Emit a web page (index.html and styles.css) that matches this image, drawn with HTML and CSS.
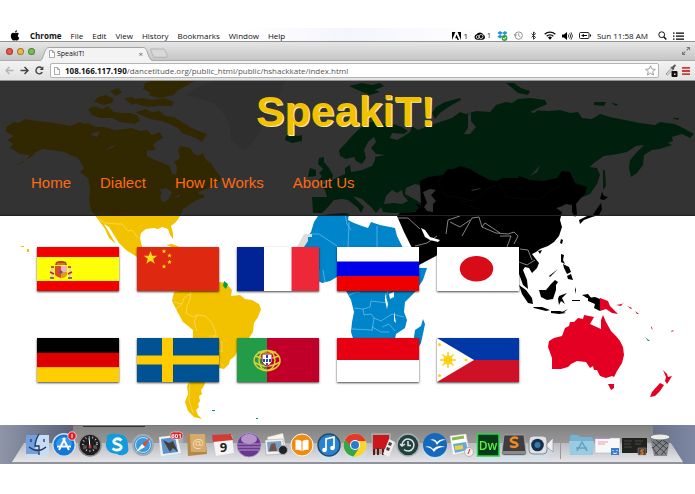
FILE: index.html
```html
<!DOCTYPE html>
<html lang="en">
<head>
<meta charset="utf-8">
<title>SpeakiT!</title>
<link rel="stylesheet" href="styles.css">
</head>
<body>
<div class="screen">
  <div class="menubar">
    <svg class="apple" viewBox="0 0 10 11"><path d="M7 .2C7 1.600 6.100 2.500 5 2.600 4.900 1.400 5.900.4 7 .2ZM5.100 3.200C5.800 3.200 6.300 2.700 7.200 2.800c.8.1 1.400.5 1.700 1C7.200 4.800 7.500 7.100 9.300 7.700 8.900 8.900 8 10.600 7 10.600c-.7 0-1-.4-1.800-.4s-1.100.4-1.800.4C2.200 10.600.8 8.200.8 6.100.8 4 2 2.800 3.300 2.800c.8 0 1.300.4 1.800.4Z"/></svg>
    <nav class="menus">
      <button class="menu strong">Chrome</button>
      <button class="menu">File</button>
      <button class="menu">Edit</button>
      <button class="menu">View</button>
      <button class="menu">History</button>
      <button class="menu">Bookmarks</button>
      <button class="menu">Window</button>
      <button class="menu">Help</button>
    </nav>
    <div class="status">
      <span class="pair"><svg class="s9" viewBox="0 0 9 9"><path d="M0 1h3.400L0 9ZM5.600 1H9v8ZM4.500 3.500 7 9H5.500L4.800 7.200H3.200Z"/></svg>1</span>
      <span class="pair cloud"><svg class="s11" viewBox="0 0 11 9"><path d="M3 8.300a2.800 2.800 0 0 1-.4-5.500A3.900 3.900 0 0 1 9.500 3.200 2.700 2.700 0 0 1 8.300 8.300Z"/><g fill="none" stroke="#fff" stroke-width=".8"><circle cx="3.700" cy="5.500" r="1.500"/><circle cx="7" cy="5" r="2"/></g></svg><small>1</small></span>
      <svg class="s11" viewBox="0 0 11 10"><path fill="#2293d8" d="M3 0 5.500 1.800 8 0l2.500 2L8 3.800 10.500 5.500 8 7.500 5.500 5.600 3 7.500.3 5.500 3 3.800.3 2Z"/><path fill="#fff" d="M5.500 2.200 7.500 3.700 5.500 5.200 3.200 3.700Z"/><circle cx="7.500" cy="7" r="2.900" fill="#37a33a"/><path d="m6 7 1.200 1.200 1.900-2.300" fill="none" stroke="#fff"/></svg>
      <svg class="s9" viewBox="0 0 9 9"><circle cx="4.700" cy="4.600" r="3.700" fill="none" stroke="#888" stroke-width=".9"/><path d="M4.700 2.300v2.600l1.800 1M.2 3l1.200 2L3 3.500" fill="none" stroke="#888" stroke-width=".8"/></svg>
      <svg class="s9" viewBox="0 0 9 9"><path d="m2.500 2.700 4 3.700-2 1.800V1l2 1.700-4 3.700" fill="none" stroke="#222" stroke-width=".9"/></svg>
      <svg class="s12" viewBox="0 0 12 9"><g fill="none" stroke="#111" stroke-width="1.300"><path d="M.7 3.300a7.500 7.500 0 0 1 10.600 0M2.600 5.300a4.800 4.800 0 0 1 6.800 0"/></g><path d="M4 6.600a2.800 2.800 0 0 1 4 0L6 8.700Z"/></svg>
      <svg class="s11" viewBox="0 0 11 9"><path d="M0 3h2l3-2.500v8L2 6H0Z"/><path d="M6.200 3q1.200 1.500 0 3M7.600 1.800q2.200 2.700 0 5.400M9 .8q3 3.700 0 7.400" fill="none" stroke="#111" stroke-width=".8"/></svg>
      <svg class="s12" viewBox="0 0 12 8"><rect x=".5" y="1" width="9.500" height="6" rx="1" fill="none" stroke="#222"/><path d="M11 3h1v2h-1ZM2 4l3-1.500v1h3v1H5v1Z"/></svg>
      <span class="clock">Sun 11:58 AM</span>
      <svg class="s9 search" viewBox="0 0 9 9"><circle cx="3.700" cy="3.700" r="2.900" fill="none" stroke="#111"/><path d="m5.700 5.700 2.700 2.800" stroke="#111" stroke-width="1.400"/></svg>
      <svg class="s11" viewBox="0 0 11 9"><path d="M0 1h1.500v1.300H0zM3 1h8v1.300H3zM0 4h1.500v1.300H0zM3 4h8v1.300H3zM0 7h1.500v1.300H0zM3 7h8v1.300H3z"/></svg>
    </div>
  </div>

  <div class="tabstrip">
    <div class="lights"><button class="light red" aria-label="Close"></button><button class="light amber" aria-label="Minimise"></button><button class="light green" aria-label="Zoom"></button></div>
    <div class="tab">
      <svg class="tabshape" viewBox="0 0 118 14" preserveAspectRatio="none"><path d="M0 14C3 14 3.500 11 5 7S7.500.5 10 .5h96c3 0 3.500 3 5 7s3 6.500 6 6.500" fill="#f3f3f3" stroke="#a2a2a2"/></svg>
      <svg class="doc" viewBox="0 0 6 8"><path d="M.5.500h3L5.500 2.500v5h-5ZM3.500.500v2h2" fill="#fff" stroke="#888" stroke-width=".7"/></svg>
      <span class="tabname">SpeakiT!</span>
      <button class="x" aria-label="Close tab">×</button>
    </div>
    <button class="newtab" aria-label="New tab"><svg viewBox="0 0 20 10"><path d="M2 1h12q1.500 0 2 1l2.300 6q.4 1.300-1 1.300H6Q4.800 9.300 4.300 8L1.500 2Q1 1 2 1Z" fill="#d8d8d8" stroke="#aaa" stroke-width=".8"/></svg></button>
    <svg class="full" viewBox="0 0 8 8"><path d="M4.800.5h2.700v2.700M7.500.5 4.700 3.300M3.200 7.500H.5V4.800M.5 7.500l2.800-2.800" fill="none" stroke="#777" stroke-width="1.100"/></svg>
  </div>

  <form class="toolbar">
    <button type="button" class="tool" aria-label="Back"><svg viewBox="0 0 9 9"><path d="M8.500 4.500H1.500M4.500 1 1 4.500 4.500 8" fill="none" stroke="#b4b4b4" stroke-width="1.400"/></svg></button>
    <button type="button" class="tool" aria-label="Forward"><svg viewBox="0 0 9 9"><path d="M.5 4.500H7.500M4.500 1 8 4.500 4.500 8" fill="none" stroke="#444" stroke-width="1.500"/></svg></button>
    <button type="button" class="tool" aria-label="Reload"><svg viewBox="0 0 9 9"><path d="M7.300 6.200A3.400 3.400 0 1 1 6.900 2.200" fill="none" stroke="#444" stroke-width="1.400"/><path d="M8.300.3v3.700H4.700Z" fill="#444"/></svg></button>
    <div class="address">
      <svg class="doc" viewBox="0 0 6 8"><path d="M.5.500h3L5.500 2.500v5h-5ZM3.500.500v2h2" fill="#fff" stroke="#888" stroke-width=".7"/></svg>
      <label class="host" for="url">108.166.117.190</label><input class="url" id="url" value="/dancetitude.org/public_html/public/hshackkate/index.html">
      <svg class="star" viewBox="0 0 11 11"><path d="m5.500.8 1.400 3.200 3.500.3-2.700 2.300.9 3.500-3.100-1.900-3.100 1.900.9-3.500L.6 4.300l3.500-.3Z" fill="#fff" stroke="#888" stroke-width=".8"/></svg>
    </div>
    <button type="button" class="ext" aria-label="Colour picker"><svg viewBox="0 0 13 13"><path d="m1 10 5.500-6 1.600 1.600L2.400 11Z" fill="#ddd" stroke="#777" stroke-width=".7"/><path d="m6 3 1.500-.4L9.200.7q1.600-.5 1.700 1L9 4l.2 1.200-1 .8L5.500 3.500Z" fill="#555"/><rect x="6.500" y="7" width="6" height="6" rx="1" fill="#111"/><path d="M9 9.500h1.500V11H9z" fill="#ddd"/></svg></button>
    <button type="button" class="more" aria-label="Menu"><svg viewBox="0 0 8 8"><path d="M0 0h8v1.800H0zM0 3.100h8v1.800H0zM0 6.200h8V8H0z" fill="#cf3a3c"/></svg></button>
  </form>

  <div class="page">
    <svg class="map" viewBox="0 81 695 344" preserveAspectRatio="xMinYMin slice" aria-hidden="true">
      <path fill="#e8e8e8" d="M185 95 200 86 215 81H285L280 95 274 108 266 122 258 134 250 146 243 151 238 146 231 140 230 124 222 112 214 103 198 99Z"/>
      <g fill="#f2c200">
        <path d="M6 127 14 122 19 123 25 119 36 121 48 122 60 124 70 126 80 122 84 124 88 123 96 127 105 127 114 130 124 129 132 128 140 131 147 130 152 135 160 132 163 138 156 142 152 146 147 151 147 156 155 160 163 163 170 166 172 174 176 175 177 167 174 162 180 158 178 150 180 146 190 148 194 154 198 156 203 153 206 160 211 163 215 170 221 177 220 181 214 185 207 189 200 191 198 194 205 195 203 198 197 200 190 204 183 209 180 216 176 222 171 226 173 233 173 239 170 235 168 229 162 227 158 229 154 228 146 229 141 233 140 238 142 247 150 247 154 252 158 262 165 272 175 277 185 290 170 285 158 272 148 260 137 257 126 250 119 243 114 235 109 227 104 224 110 234 116 244 109 238 105 229 97 218 91 210 89 200 90 188 88 178 80 172 84 168 78 158 70 155 64 152 52 150 43 149 36 152 32 156 22 163 12 167 26 160 30 155 20 154 10 148 13 144 7 140 14 136 6 132Z"/>
        <path d="M88 109 94 106 102 109 108 106 114 112 122 113 130 113 137 115 140 120 135 124 120 122 112 118 100 118 92 115ZM94 102 98 97 106 95 114 99 112 103 104 105ZM124 98 132 97 139 102 132 105ZM136 112 146 109 152 112 160 111 165 116 174 117 182 122 190 127 196 130 207 134 202 142 196 138 190 136 182 133 178 128 170 124 162 121 155 120 148 118 140 115ZM145 83 152 81H195L186 86 178 90 174 95 160 98 148 95 151 93 143 89ZM134 99 142 98 152 100 164 98 174 102 172 106 160 106 148 107 136 104ZM110 91 118 88 122 92 116 96ZM144 144H152L156 149 150 151 143 148Z"/>
        <path d="M172 301 174 292 180 291 190 284 219 282 226 283 232 290 231 296 240 295 245 299 252 300 259 304 261 309 258 317 254 323 253 332 249 338 243 344 238 350 235 356 230 360 229 364 224 369 219 368 212 374 206 380 204 386 201 390 202 394 199 396 200 401 198 404 199 407 196 410 198 415 202 419 194 417 188 411 185 402 188 394 187 386 190 380 191 360 193 338 193 330 183 322 178 313Z"/>
        <path d="M166 245 172 244 180 247 179 250 172 247ZM27 249H29V252H27ZM21 246H24V247H21Z"/>
      </g>
      <g fill="#00a047">
        <path d="M339 150 345 144 352 136 358 130 366 124 374 121 380 124 390 123 402 127 408 131 404 134 392 133 390 138 397 140 404 136 410 132 412 126 418 130 428 126 440 122 452 118 460 112 466 114 476 111 490 112 496 105 506 102 512 103 518 99 530 98 545 100 547 104 535 110 548 111 560 110 570 113 578 112 582 118 592 119 600 114 610 117 625 120 640 123 655 125 660 122 675 124 685 129 694 134 690 138 682 134 672 137 673 141 668 143 672 145 660 149 652 150 644 155 643 165 637 173 631 177 629 168 630 160 636 153 644 145 636 146 627 152 618 154 604 156 594 163 590 167 597 168 600 175 597 184 590 194 583 197 570 195 520 190 440 190 423 186 415 184 406 188 405 194 416 200 424 205 418 211 405 213 393 213 383 212 381 207 376 213 371 207 362 199 353 196 364 207 361 213 358 208 348 200 342 199 334 200 328 207 322 213 313 213 312 197 327 197 325 190 320 186 330 181 338 177 345 174 345 168 350 165 351 172 362 170 372 166 375 160 375 157 385 155 376 154 371 148 376 142 374 137 368 142 364 150 366 158 362 164 356 161 354 157 346 159 340 156Z"/>
        <path d="M319 158 324 157 324 162 329 168 333 175 332 180 318 181 322 176 319 173 323 169 318 164ZM310 168 316 170 316 176 308 177 309 171ZM286 136 292 134 298 136 302 135 302 141 292 143 285 140ZM349 86 362 83 372 85 380 83 384 86 375 90 380 92 370 95 360 91ZM432 113 436 107 445 102 460 98 461 100 450 106 440 113 435 119ZM506 83 514 83 521 88 530 91 528 95 518 93 512 88ZM594 102 606 102 604 106 594 105ZM611 103 618 104 616 106ZM672 118 679 118 678 120ZM603 169 605 171 606 186 603 190ZM224 281 228 284 226 289 223 286ZM212 410H215V411H212ZM256 418H258V419H256ZM645 337 650 341H648Z"/>
      </g>
      <path fill="#fff" d="M468 114 471 113 471 121 476 127 470 134 464 134 468 128 468 122ZM530 112 543 106 534 113ZM540 165 537 172 530 176 536 170ZM384 204 386 196 392 190 397 193 402 190 403 195 408 201 402 204 394 203ZM159 190 166 188 172 192 168 200 163 202 160 198 162 192ZM174 198 180 194 179 197ZM90 134 100 131 97 137ZM104 150 116 144 112 148Z"/>
      <g fill="#0085ca">
        <path d="M305 240 311 232 314 222 318 216 330 214 345 213 349 214 348 220 354 223 362 226 368 228 371 222 380 225 390 227 395 228 397 236 403 248 409 262 413 268 427 268 423 280 415 292 405 302 404 312 407 320 405 328 396 334 394 345 355 345 351 332 352 322 354 312 351 300 346 291 342 282 337 277 330 281 322 283 313 278 307 270 303 262 303 250Z"/>
        <path d="M423 319 425 324 424 329 421 343 418 348 415 346 414 337 415 330 421 326Z"/>
      </g>
      <path fill="#ddd" d="M304 234H312V237H308V241L304 247H297Z"/>
      <g fill="none" stroke="#86c8ee" stroke-width=".6">
        <path d="M311 234H319L337 246M349 222 348 247M345 214 347 224 351 230M377 226V247M319 270V281M323 270 325 282M348 296 355 292 360 292M354 308 363 309 364 315 371 314 374 318 372 331M352 329 372 330M363 309 370 307 371 301 388 303M388 291 385 300M374 318 381 321 392 314 404 317M382 327 389 324 395 331M372 327 381 332 389 332"/>
      </g>
      <path fill="#fff" d="M389 294 394 292 394 297 390 299ZM385 293 388 304 387 309 385 300ZM394 311 396 323 394 321Z"/>
      <g fill="none" stroke="#ffe177" stroke-width=".6">
        <path d="M99 219 105 223 117 224 122 224 128 231 132 230 139 239M174 302 182 304 184 298 190 294M182 304 176 309M191 291 190 300 187 306 186 313 193 317 197 315 205 316 212 323 216 333 214 338M197 315 194 322 197 331M214 338 222 342 222 352 216 349M209 336 218 336M196 341 193 356 190 380 189 400 193 413M219 361 224 367"/>
      </g>
      <g>
        <path d="M420 181 428 177 443 175 448 169 454 169 460 166 470 169 478 174 490 180 497 181 503 178 518 178 519 176 530 180 543 181 557 178 562 171 570 172 575 183 587 187 585 194 580 199 576 204 577 214 575 217 572 212 572 205 566 204 560 207 556 208 562 212 560 220 562 227 559 236 554 242 548 246 540 249 536 252 532 254 535 258 539 263 537 268 532 273 529 268 525 267 523 270 527 280 528 289 523 285 519 274 515 262 505 270 460 270 442 250 436 256 419 265 412 248 404 232 397 216 400 213 415 212 419 208 415 203 421 206Z"/>
        <path d="M602 192 604 196 608 197 604 200 600 199ZM601 203 602 209 599 215 592 217 584 220 580 224 579 220 587 216 593 215 596 210ZM561 239 563 240 562 244 560 243ZM538 251 542 250 540 254ZM561 254 564 255 563 260 565 264 561 262ZM563 264 569 267 571 272 567 274 564 268ZM567 276 571 274 573 280 568 279ZM519 285 526 290 532 298 533 304 528 303 522 294ZM533 307 542 307 550 310 546 311 534 308ZM539 290H546L551 284 555 280 558 282 556 285 556 290 553 299 547 300 541 297ZM559 296 567 293 562 298 565 304 561 301 559 305 558 299ZM551 311 560 311 566 313 559 314 551 313ZM582 295 588 294 592 299 587 298ZM588 298 595 297 600 299V311L594 308 595 304 588 301ZM560 313 568 309 563 313ZM575 290 576 287V294ZM549 276 558 269 550 277ZM572 300 580 300 580 301H572Z"/>
      </g>
      <path fill="none" stroke="#444" stroke-width=".5" d="M497 181 504 190 506 197 522 199 540 199 552 190 560 187M460 202 475 200 487 189 497 185M467 205 480 210M442 175 438 183 445 195 470 200"/>
      <path fill="none" stroke="#bbb" stroke-width=".7" d="M462 236 472 218 479 217 482 227 496 233 508 234 514 232 518 236 514 244M500 236H511L507 247M397 218 408 218 420 229M415 246 427 243 437 236M446 234 448 220 460 216M450 222 460 227 470 220M520 249 528 250 532 260M519 262 527 265 535 260M482 227 485 223 500 233"/>
      <path fill="#fff" d="M423 192 430 189 436 190 431 195 436 201 433 204 433 212 427 211 424 207 427 203ZM421 228 425 230 430 237 440 240 438 242 430 240 425 237ZM471 190 481 188 480 189 472 191Z"/>
      <g fill="#e30022">
        <path d="M548 347 549 341 554 338 562 336 565 328 569 326 570 322 574 322 578 318 583 319 584 315 594 317 590 324 601 329 601 320 603 315 606 322 611 331 616 336 620 341 623 347 624 355 622 363 617 371 614 377 612 376 606 378 600 376 597 370 594 370 593 366 590 368 586 362 577 361 571 364 568 367 561 369 552 369 552 358ZM608 384H614V388L611 390Z"/>
        <path d="M600 298 608 301 610 306 614 310 618 314 612 313 606 309 600 311ZM663 370 667 374 668 377 672 376 669 381 667 384 665 381 666 377ZM660 383 664 385 660 391 655 396 650 397 652 392ZM616 305 622 304 624 302 621 306ZM627 306 632 308 631 309ZM635 311 639 314H637ZM651 326 653 330 651 328ZM671 331 674 330 672 332Z"/>
      </g>
    </svg>

    <header class="header">
      <h1 class="title">SpeakiT!</h1>
      <nav class="nav">
        <a href="#home">Home</a><a href="#dialect">Dialect</a><a href="#how">How It Works</a><a href="#about">About Us</a>
      </nav>
    </header>

    <main class="flags">
      <a class="flag" href="#es" aria-label="Spanish"><svg viewBox="0 0 82 44"><path fill="#f20000" d="M0 0h82v44H0z"/><path fill="#ffff08" d="M0 10h82v24H0z"/><path d="M15 21v9M33 21v9" stroke="#e4cfc4" stroke-width="2"/><path d="M14 20h3M31 20h3M13 25l4 2M35 25l-4 2" stroke="#c01d2c" stroke-width="1.500"/><path d="M13 31h4M31 31h4" stroke="#465079" stroke-width="1.500"/><path d="M18 19h12v9q-6 6-12 0Z" fill="#dc4828"/><path d="M24 19h6v6h-6Z" fill="#edb4bf"/><path d="M24 25h6v3l-3 3-3 0Z" fill="#e39a25"/><circle cx="24" cy="25" r="1.500" fill="#425ca8"/><path d="m18 18 1-3 3-1h4l3 1 1 3Z" fill="#b94330"/><path d="M20 17h8" stroke="#ef9b45"/></svg></a>
      <a class="flag" href="#zh" aria-label="Chinese"><svg viewBox="0 0 82 44"><path fill="#de2910" d="M0 0h82v44H0z"/><path fill="#ffdf18" d="m13.500 4 1.700 4.800h5.100l-4.100 3 1.500 4.900-4.200-3-4.200 3 1.500-4.900-4.100-3h5.100ZM27 2l.6 1.500h1.700L28 4.500l.5 1.700L27 5.200l-1.500 1 .5-1.700-1.300-1h1.700ZM32.500 6.300l.6 1.500h1.700l-1.300 1 .5 1.700-1.500-1-1.500 1 .5-1.700-1.300-1h1.700ZM32.500 12.800l.6 1.500h1.700l-1.300 1 .5 1.700-1.500-1-1.500 1 .5-1.700-1.300-1h1.700ZM27 17.300l.6 1.500h1.700l-1.300 1 .5 1.700-1.500-1-1.500 1 .5-1.700-1.300-1h1.700Z"/></svg></a>
      <a class="flag" href="#fr" aria-label="French"><svg viewBox="0 0 82 44"><path fill="#fff" d="M0 0h82v44H0z"/><path fill="#002395" d="M0 0h27v44H0z"/><path fill="#ed2939" d="M54.500 0H82v44H54.500z"/></svg></a>
      <a class="flag" href="#ru" aria-label="Russian"><svg viewBox="0 0 82 44"><path fill="#fff" d="M0 0h82v15H0z"/><path fill="#0000e8" d="M0 14.500h82V29H0z"/><path fill="#ef0000" d="M0 29h82v15H0z"/></svg></a>
      <a class="flag" href="#ja" aria-label="Japanese"><svg viewBox="0 0 82 44"><path fill="#fff" d="M0 0h82v44H0z"/><ellipse cx="39.500" cy="21.700" rx="16.700" ry="12.700" fill="#d80c18"/></svg></a>
      <a class="flag" href="#de" aria-label="German"><svg viewBox="0 0 82 44"><path d="M0 0h82v15H0z"/><path fill="#d00" d="M0 14.700h82v15H0z"/><path fill="#ffce00" d="M0 29.300h82V44H0z"/></svg></a>
      <a class="flag" href="#sv" aria-label="Swedish"><svg viewBox="0 0 82 44"><path fill="#005293" d="M0 0h82v44H0z"/><path fill="#fecb00" d="M25 0h11v44H25zM0 17.500h82v9H0z"/></svg></a>
      <a class="flag" href="#pt" aria-label="Portuguese"><svg viewBox="0 0 82 44"><path fill="#c10029" d="M0 0h82v44H0z"/><path fill="#249b48" d="M0 0h30v44H0z"/><g fill="none" stroke="#ddcf36" stroke-width="1.500"><ellipse cx="30" cy="22.500" rx="13" ry="10"/><ellipse cx="30" cy="22.500" rx="8" ry="10"/><path d="M18 18q12 5 24 0M17 24q13 8 26 0M21 14q9 3 18 0"/></g><path fill="#fff" stroke="#c10029" stroke-width="1" d="M25 16h10v8q-5 8-10 0Z"/><path fill="#2d4a9b" d="M29 17h2v3h-2zM29 21h2v3h-2zM29 25h2v2h-2zM26 21h2v3h-2zM32 21h2v3h-2z"/></svg></a>
      <a class="flag" href="#id" aria-label="Indonesian"><svg viewBox="0 0 82 44"><path fill="#fff" d="M0 0h82v44H0z"/><path fill="#e70011" d="M0 0h82v22H0z"/></svg></a>
      <a class="flag" href="#tl" aria-label="Tagalog"><svg viewBox="0 0 82 44"><path fill="#0038a8" d="M0 0h82v22H0z"/><path fill="#ce1126" d="M0 22h82v22H0z"/><path fill="#fff" d="m0 0 37 22L0 44Z"/><g fill="#fcd116"><circle cx="11" cy="22" r="4.600"/><circle cx="2.500" cy="6.500" r="1.500"/><circle cx="2.500" cy="37.500" r="1.500"/><circle cx="29" cy="22" r="1.500"/></g><path d="M11 14v16M3 22h16M5.500 16.500l11 11M16.500 16.500l-11 11" stroke="#fcd116" stroke-width="1.500"/></svg></a>
    </main>
  </div>

  <div class="desktop">
    <div class="backwin"></div>
    <div class="dock">
      <svg class="icon lit" viewBox="0 0 26 30"><path fill="#72a0df" d="M2 5h23v19H2z"/><path fill="#c6dcf5" d="M14 5h11v19H15l-1-5h-3Z"/><path d="M15 4q-4 7-4 12h4v9M7 9v3M20 9v3M5 17q9 7 17 0" fill="none" stroke="#20365e" stroke-width="1.300"/></svg>
      <svg class="icon" viewBox="0 0 26 30"><circle cx="13" cy="15" r="11.300" fill="#1278d8" stroke="#d3dbe5" stroke-width="1.500"/><path d="M5 15a8 8 0 0 1 16 0" fill="#57b7f5" opacity=".5"/><path d="m8 20 6-12M18 20 12 8M6 16.500h14" stroke="#fff" stroke-width="2"/><circle cx="21" cy="6" r="4.200" fill="#e11b22" stroke="#fff" stroke-width=".7"/><path d="M21 4v4" stroke="#fff"/></svg>
      <svg class="icon" viewBox="0 0 26 30"><circle cx="13" cy="15" r="11" fill="#1d1d20" stroke="#888" stroke-width="1.500"/><circle cx="13" cy="14" r="7" fill="none" stroke="#bbb" stroke-dasharray="1 2.500" stroke-width="2"/><path d="M13 17 12 8" stroke="#fff"/><circle cx="13" cy="17" r="1.500" fill="#d33"/><circle cx="8" cy="17" r="2" fill="#555"/><circle cx="18" cy="17" r="2" fill="#555"/></svg>
      <svg class="icon" viewBox="0 0 26 30"><path fill="#129bdd" d="M3 9q-1-5 4-5 3-1 5 0 12-1 12 12 2 8-5 9-3 1-6-1Q1 23 2 13Z"/><path d="M17.500 10.500Q15 8 12 9q-4 2-1 4.300l4 1.500q4 2 1 4.500-4 2-7.500-.8" fill="none" stroke="#fff" stroke-width="2.800"/></svg>
      <svg class="icon" viewBox="0 0 26 30"><circle cx="13" cy="15" r="10" fill="#3a98dd" stroke="#a7abb0" stroke-width="2"/><circle cx="13" cy="15" r="7.500" fill="none" stroke="#bee2f5"/><path d="m20 8-5 9-3-3Z" fill="#e5472f"/><path d="m6 22 6-8 3 3Z" fill="#fff"/></svg>
      <svg class="icon lit" viewBox="0 0 26 30"><path fill="#f2f2ee" d="m2 7 18-2 4 18-20 3Z"/><path fill="#5b93cd" d="m4 9 14-2 3 15-15 2Z"/><path d="m6 10 6 3 4-2 5 11-5-4-3 4-3-5Z" fill="#473f35"/><rect x="13" y="2" width="13" height="7" rx="3.500" fill="#de222a" stroke="#fff" stroke-width=".5"/><text class="badge" x="19.500" y="8">601</text></svg>
      <svg class="icon" viewBox="0 0 26 30"><path fill="#b58849" d="M4 4h18l2 20-19 2Z"/><path fill="#d5ac6c" d="M7 4h15l1 18H8Z"/><text class="glyph tan" x="15" y="18">@</text></svg>
      <svg class="icon" viewBox="0 0 26 30"><path fill="#f4f4f4" d="m3 8 19-3 2 18-18 3Z"/><path fill="#d33b37" d="m2 5 19-1 2 6-20 2Z"/><text class="glyph" x="13.500" y="22">9</text></svg>
      <svg class="icon" viewBox="0 0 26 30"><circle cx="13" cy="15" r="12" fill="#66398d" stroke="#b79bce" stroke-width=".8"/><ellipse cx="13" cy="9" rx="8" ry="5" fill="#b694cb"/><path d="M2 14h22M2 17h22M3 20h20" stroke="#b897d0"/></svg>
      <svg class="icon" viewBox="0 0 26 30"><path fill="#f7f4ed" stroke="#999" stroke-width=".5" d="m4 7 16-4 3 14-16 4Z"/><path fill="#f1f1f1" stroke="#999" stroke-width=".5" d="m2 10 18-1 1 15-18 1Z"/><path fill="#76a1c4" d="m4 12 14-1 1 10-14 1Z"/><path d="m8 14 4-1 2 8H6Z" fill="#795241"/><circle cx="20" cy="20" r="4.500" fill="#222" stroke="#aaa"/></svg>
      <svg class="icon" viewBox="0 0 26 30"><circle cx="13" cy="15" r="11" fill="#f28b0c" stroke="#fff" stroke-width="1"/><path d="M12.500 11q-3-2-6-1v10q3-1 6 1Zm1 0q3-2 6-1v10q-3-1-6 1Z" fill="#fff"/></svg>
      <svg class="icon lit" viewBox="0 0 26 30"><circle cx="13" cy="15" r="11" fill="#2782cf" stroke="#264a69" stroke-width="1.500"/><path d="M10 20V9l8-2v11" fill="none" stroke="#fff" stroke-width="1.700"/><circle cx="8.500" cy="20" r="2.300" fill="#fff"/><circle cx="16.500" cy="18" r="2.300" fill="#fff"/></svg>
      <svg class="icon lit" viewBox="0 0 26 30"><circle cx="13" cy="15" r="11.500" fill="#ffd42c"/><path fill="#df3a2b" d="M2.800 10A11.500 11.500 0 0 1 23.800 11H13L9 17Z"/><path fill="#37a64a" d="M2.800 10A11.500 11.500 0 0 0 11.500 26.400L17 18l-7-1Z"/><circle cx="13" cy="15" r="5" fill="#fff"/><circle cx="13" cy="15" r="4" fill="#287bd3"/></svg>
      <svg class="icon" viewBox="0 0 26 30"><path fill="#a4a4a4" d="M2 3h20v5l-1 16H4Z"/><path fill="#c9171b" d="M4 5h16v14H4Z"/><path d="M5 19v6M9 18v7M14 19v6" stroke="#5a1a16" stroke-width="2"/><path fill="#eee" d="m20 9 6 3-6 15-6-3Z"/><path d="m20 12 3 1-1 3-3-1ZM18 17l3 1-1 3-3-1Z" fill="#444"/></svg>
      <svg class="icon" viewBox="0 0 26 30"><circle cx="13" cy="15" r="11" fill="#233f3f" stroke="#a7b1af" stroke-width="1.500"/><path d="M7 15a6 6 0 1 1 2 4.500M5 14l2 2 3-2M13 11v4.500h3" fill="none" stroke="#d8e9e3" stroke-width="1.500"/></svg>
      <svg class="icon lit" viewBox="0 0 26 30"><circle cx="13" cy="15" r="12" fill="#1569bd"/><path d="M8 10q5-2 7 2 4-4 9-2-6 0-9 5-2-5-7-5ZM3 17q5-2 8 2 5-5 12-2-8 0-11 5-3-5-9-5Z" fill="#fff"/></svg>
      <svg class="icon" viewBox="0 0 26 30"><path fill="#fff" stroke="#ccc" stroke-width=".5" d="m2 6 16-2 3 17-16 4Z"/><path d="m4 9 12-2" stroke="#88bc47" stroke-width="3"/><path d="m5 14 13-2 2 8-13 3Z" fill="#67a8db"/><path d="m7 18 8-1" stroke="#f1cf36" stroke-width="4"/><circle cx="21" cy="22" r="4.500" fill="#eee" stroke="#888" stroke-width=".5"/><path d="m20 24 2-5" stroke="#d22"/></svg>
      <svg class="icon lit" viewBox="0 0 26 30"><path fill="#073b17" stroke="#27d647" stroke-width="1.500" d="M2.500 4h21.500v22H2.500z"/><text class="dw" x="13" y="20">Dw</text></svg>
      <svg class="icon lit" viewBox="0 0 26 30"><path fill="#3e3e40" stroke="#aaa" stroke-width=".8" d="M3 5h20l2 18q0 2-2 2H3q-2 0-2-2Z"/><path fill="#8b8b8b" d="M2 21h22v3H2z"/><path d="M17 8.500Q14 7 11.500 8 8 10 11.500 12l3.500 1q3 2 0 3.500-3 1-6-.5" fill="none" stroke="#f18a22" stroke-width="2.500"/></svg>
      <svg class="icon lit" viewBox="0 0 26 30"><rect x="1" y="6" width="18" height="18" rx="4" fill="#dfe2e5" stroke="#888"/><circle cx="9.500" cy="15" r="6.300" fill="#172f4b"/><circle cx="9.500" cy="15" r="3" fill="#3879aa"/><path d="m19 14 6-6v14l-6-5Z" fill="#eee" stroke="#888" stroke-width=".6"/></svg>
      <span class="divider"></span>
      <svg class="icon" viewBox="0 0 26 30"><path fill="#76b3d2" d="M2 7q0-2 2-2h6l2 2h11q2 0 2 2v15H2Z"/><path fill="#99cbe3" d="M1 11h25l-1 14H2Z"/><path d="m9 21 5-9 5 9M8 18h11" fill="none" stroke="#659fbe" stroke-width="1.500"/></svg>
      <svg class="icon" viewBox="0 0 26 30"><path fill="#f7f8fa" stroke="#aaa" stroke-width=".5" d="M1 8h25v15H1z"/><path fill="#ba86d6" d="M1 8h15v1H1z"/><path d="M4 12h10M4 14h7" stroke="#e17979" stroke-width=".7"/><path fill="#3d7dcd" d="M17 18h8v7h-8z"/><path d="M19 20v1M23 20v1M19 23q2 1 4 0" stroke="#fff"/></svg>
      <svg class="icon" viewBox="0 0 26 30"><path fill="#20221e" d="M1 8h25v15H1z"/><path d="M3 11h8M3 14h7M3 17h8M14 11h8M14 14h6" stroke="#4a4b44"/><path fill="#493d35" stroke="#999" stroke-width=".5" d="M17 18h8v7h-8z"/><path d="M23 20h-3v2h2v2h-3" fill="none" stroke="#f18a22"/></svg>
      <svg class="icon" viewBox="0 0 26 30"><path fill="#777a7e" fill-opacity=".85" d="M3 7h20l-3 19H7Z"/><ellipse cx="13" cy="7" rx="10" ry="3" fill="#ececec" stroke="#777"/><path d="m6 12 13 12M5 17l6 8M9 10l11 9M16 10l5 4M20 12 8 24M21 17l-7 8M15 10 6 18" stroke="#303236" stroke-width=".8"/></svg>
    </div>
  </div>
</div>
</body>
</html>
```

FILE: styles.css
```css
* { box-sizing: border-box; }

body {
  margin: 0;
  background: #fff;
  color: #111;
  font-family: "Open Sans", "Noto Sans", sans-serif;
  font-size: 8px;
  line-height: 12px;
}

button {
  padding: 0;
  border: 0;
  background: none;
  color: inherit;
  font: inherit;
}

svg { display: block; flex: none; }

.screen { padding: 28px 0 30px; }

/* System menu bar */
.menubar {
  display: flex;
  align-items: center;
  height: 14px;
  padding: 2px 11px 0 10px;
  border-bottom: 1px solid #929292;
  background: linear-gradient(90deg, #fff 35%, #f4f5fd 50%, #fff 70%);
}
.apple { width: 10px; height: 11px; margin-right: 10px; }
.menus { display: flex; gap: 9px; white-space: nowrap; }
.strong { font-weight: 700; }
.status { display: flex; align-items: center; gap: 6px; margin-left: auto; white-space: nowrap; }
.pair { display: flex; align-items: center; gap: 2px; }
.pair small { font-size: 7px; }
.s9 { width: 9px; height: 9px; }
.s11 { width: 11px; height: 10px; }
.s12 { width: 12px; height: 9px; }
.search { margin-left: 4px; }

/* Browser window */
.tabstrip {
  display: flex;
  align-items: center;
  height: 19px;
  padding: 0 5px 0 6px;
  border-bottom: 1px solid #ababab;
  background: linear-gradient(#e6e6e6, #c6c6c6);
}
.lights { display: flex; gap: 4px; }
.light { width: 7px; height: 7px; border: 1px solid #0005; border-radius: 50%; }
.red { background: #ee5549; }
.amber { background: #efb546; }
.green { background: #78bf4d; }
.tab {
  position: relative;
  display: flex;
  align-items: center;
  align-self: flex-end;
  width: 116px;
  height: 14px;
  margin: 0 0 -1px 4px;
  padding: 0 12px 0 10px;
}
.tabshape { position: absolute; inset: 0; width: 100%; height: 100%; }
.tab > :not(.tabshape) { position: relative; }
.doc { width: 6px; height: 8px; }
.tabname { margin-left: 2px; font-size: 7px; }
.x { margin-left: auto; color: #555; }
.newtab { align-self: flex-end; margin: 0 0 2px -6px; }
.newtab svg { width: 20px; height: 10px; }
.full { width: 8px; height: 8px; margin-left: auto; }

.toolbar {
  display: flex;
  align-items: center;
  height: 20px;
  padding: 1px 5px 1px 5px;
  border-bottom: 1px solid #8f9391;
  background: linear-gradient(#f3f3f3, #e2e2e2);
}
.tool { margin-right: 6px; }
.tool svg { width: 9px; height: 9px; }
.address {
  display: flex;
  flex: 1;
  align-items: center;
  min-width: 0;
  height: 15px;
  padding: 0 2px 0 3px;
  border: 1px solid #b4b4b4;
  border-radius: 2px;
  background: #fff;
}
.host { margin-left: 5px; color: #111; font-weight: 700; }
.url {
  flex: 1;
  min-width: 0;
  padding: 0;
  border: 0;
  outline: 0;
  background: none;
  color: #555;
  font: inherit;
}
.star { width: 11px; height: 11px; }
.ext { margin: 0 4px 0 6px; }
.ext svg { width: 13px; height: 13px; }
.more svg { width: 8px; height: 8px; }

/* Web page */
.page {
  position: relative;
  overflow: hidden;
  background: #fff;
  font-family: "Liberation Sans", Arial, sans-serif;
}
.map { position: absolute; inset: 0; width: 100%; height: 100%; }
.header {
  position: relative;
  padding: 5px 0 23px;
  border-bottom: 1px solid #222;
  background: rgba(0, 0, 0, .8);
}
.title {
  margin: 0;
  padding-right: 4px;
  color: #f2c200;
  font-size: 43px;
  line-height: 50px;
  text-align: center;
  text-shadow: 1px 1px 0 #f8eca8;
}
.nav { display: flex; gap: 29px; padding: 37px 0 0 31px; }
.nav a { color: #ff6a13; font-size: 15px; line-height: 19px; text-decoration: none; }
.flags {
  position: relative;
  display: grid;
  grid-template-columns: repeat(5, 82px);
  gap: 47px 18px;
  padding: 31px 37px 43px;
}
.flag { display: block; box-shadow: 0 1px 2px #000b; }
.flag svg { width: 100%; height: auto; }

/* Desktop and dock */
.desktop {
  position: relative;
  padding: 0 22px 0 12px;
  background: linear-gradient(90deg, #8f96a8, #5c637a 10%, #5c637a 90%, #7e88a3);
  overflow: hidden;
}
.backwin {
  position: absolute;
  inset: 0 42px 0 73px;
  background: linear-gradient(#838383, #b0b0b0);
  border-top: 1px solid #777;
}
.backwin::before {
  content: "";
  display: block;
  width: 62px;
  height: 1px;
  margin-left: 10px;
  background: #333;
}
.dock {
  position: relative;
  display: flex;
  align-items: center;
  justify-content: space-between;
  height: 39px;
  padding: 0 0 0 12px;
}
.dock::before {
  content: "";
  position: absolute;
  inset: 18px -10px 2px 0;
  background: linear-gradient(#b9bac0, #e5e5e9);
  clip-path: polygon(12px 0, calc(100% - 12px) 0, 100% 100%, 0 100%);
}
.dock::after {
  content: "";
  position: absolute;
  inset: auto -10px 0 0;
  height: 2px;
  background: #909399;
}
.icon { position: relative; width: 26px; height: 30px; overflow: visible; }
.lit { filter: drop-shadow(0 5px 1px #c6ecff55); }
.divider { position: relative; width: 1px; height: 16px; margin: 12px 6px 0; background: #999; }
.badge { fill: #fff; font-size: 6px; font-weight: 700; text-anchor: middle; }
.glyph { fill: #222; font-size: 13px; font-weight: 700; text-anchor: middle; }
.tan { fill: #f4dfb8; font-weight: 400; }
.dw { fill: #63ed48; font-size: 12px; font-weight: 600; text-anchor: middle; }
```
